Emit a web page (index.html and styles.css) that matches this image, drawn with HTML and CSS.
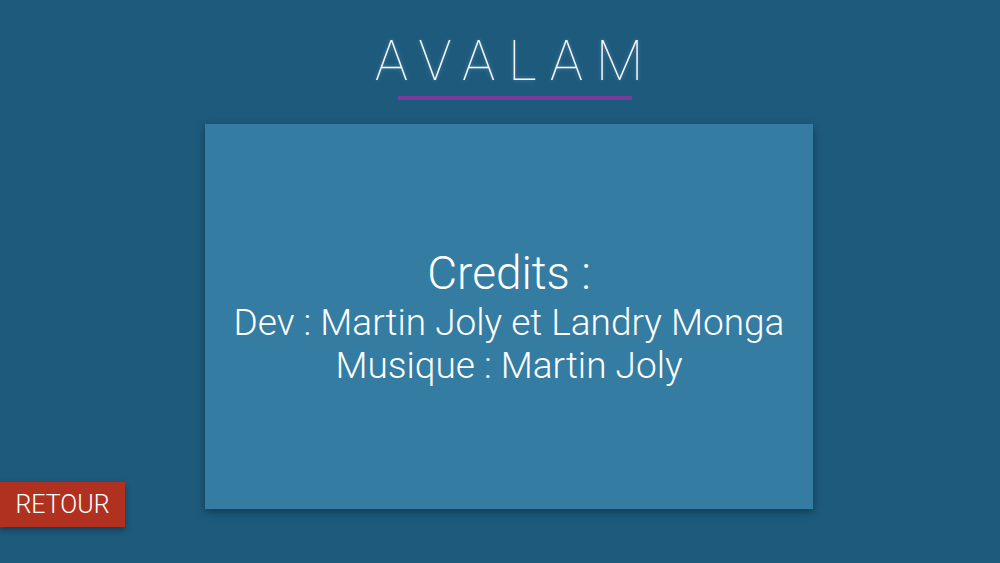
FILE: index.html
```html
<!DOCTYPE html>
<html lang="fr">
<head>
<meta charset="utf-8">
<title>Avalam - Credits</title>
<link rel="stylesheet" href="styles.css">
</head>
<body>
<main class="screen">
  <header class="header">
    <h1 class="title">AVALAM</h1>
    <div class="title-bar"></div>
  </header>
  <section class="card">
    <p class="credits-head">Credits :</p>
    <p class="credits-line">Dev : Martin Joly et Landry Monga</p>
    <p class="credits-line">Musique : Martin Joly</p>
  </section>
  <button class="back-btn">RETOUR</button>
</main>
</body>
</html>
```
FILE: styles.css
```css
html, body {
  margin: 0;
  padding: 0;
  width: 1000px;
  height: 563px;
  overflow: hidden;
  background: #1d5a7c;
  font-family: Roboto, "Liberation Sans", sans-serif;
  color: #fff;
}

.screen {
  position: relative;
  width: 1000px;
  height: 563px;
  display: flex;
  flex-direction: column;
  align-items: center;
  padding-left: 18px;
  box-sizing: border-box;
}

.header {
  display: flex;
  flex-direction: column;
  align-items: center;
  padding-top: 29px;
}

.title {
  margin: 0;
  font-weight: 100;
  font-size: 55px;
  line-height: 64px;
  letter-spacing: 13px;
  padding-left: 13px;
  color: #f4f8fb;
  text-shadow: 0 0 4px rgba(200, 230, 255, 0.35);
}

.title-bar {
  width: 234px;
  height: 4px;
  background: #7a3c9c;
  margin-top: 3px;
  margin-left: 12px;
}

.card {
  margin-top: 24px;
  width: 608px;
  height: 385px;
  background: #357ca3;
  box-shadow: 0 3px 8px rgba(0, 0, 0, 0.35);
  display: flex;
  flex-direction: column;
  align-items: center;
  justify-content: center;
  padding-top: 2px;
  box-sizing: border-box;
}

.credits-head {
  margin: 0 0 3px;
  font-weight: 300;
  font-size: 46px;
  line-height: 50px;
}

.credits-line {
  margin: 0;
  font-weight: 300;
  font-size: 37px;
  line-height: 43px;
}

.back-btn {
  position: absolute;
  left: 0;
  top: 482px;
  width: 125px;
  height: 45px;
  border: none;
  background: #b03120;
  color: #fff;
  font-family: Roboto, "Liberation Sans", sans-serif;
  font-weight: 300;
  font-size: 25px;
  padding: 0;
  box-shadow: 0 3px 6px rgba(0, 0, 0, 0.35);
}
```
